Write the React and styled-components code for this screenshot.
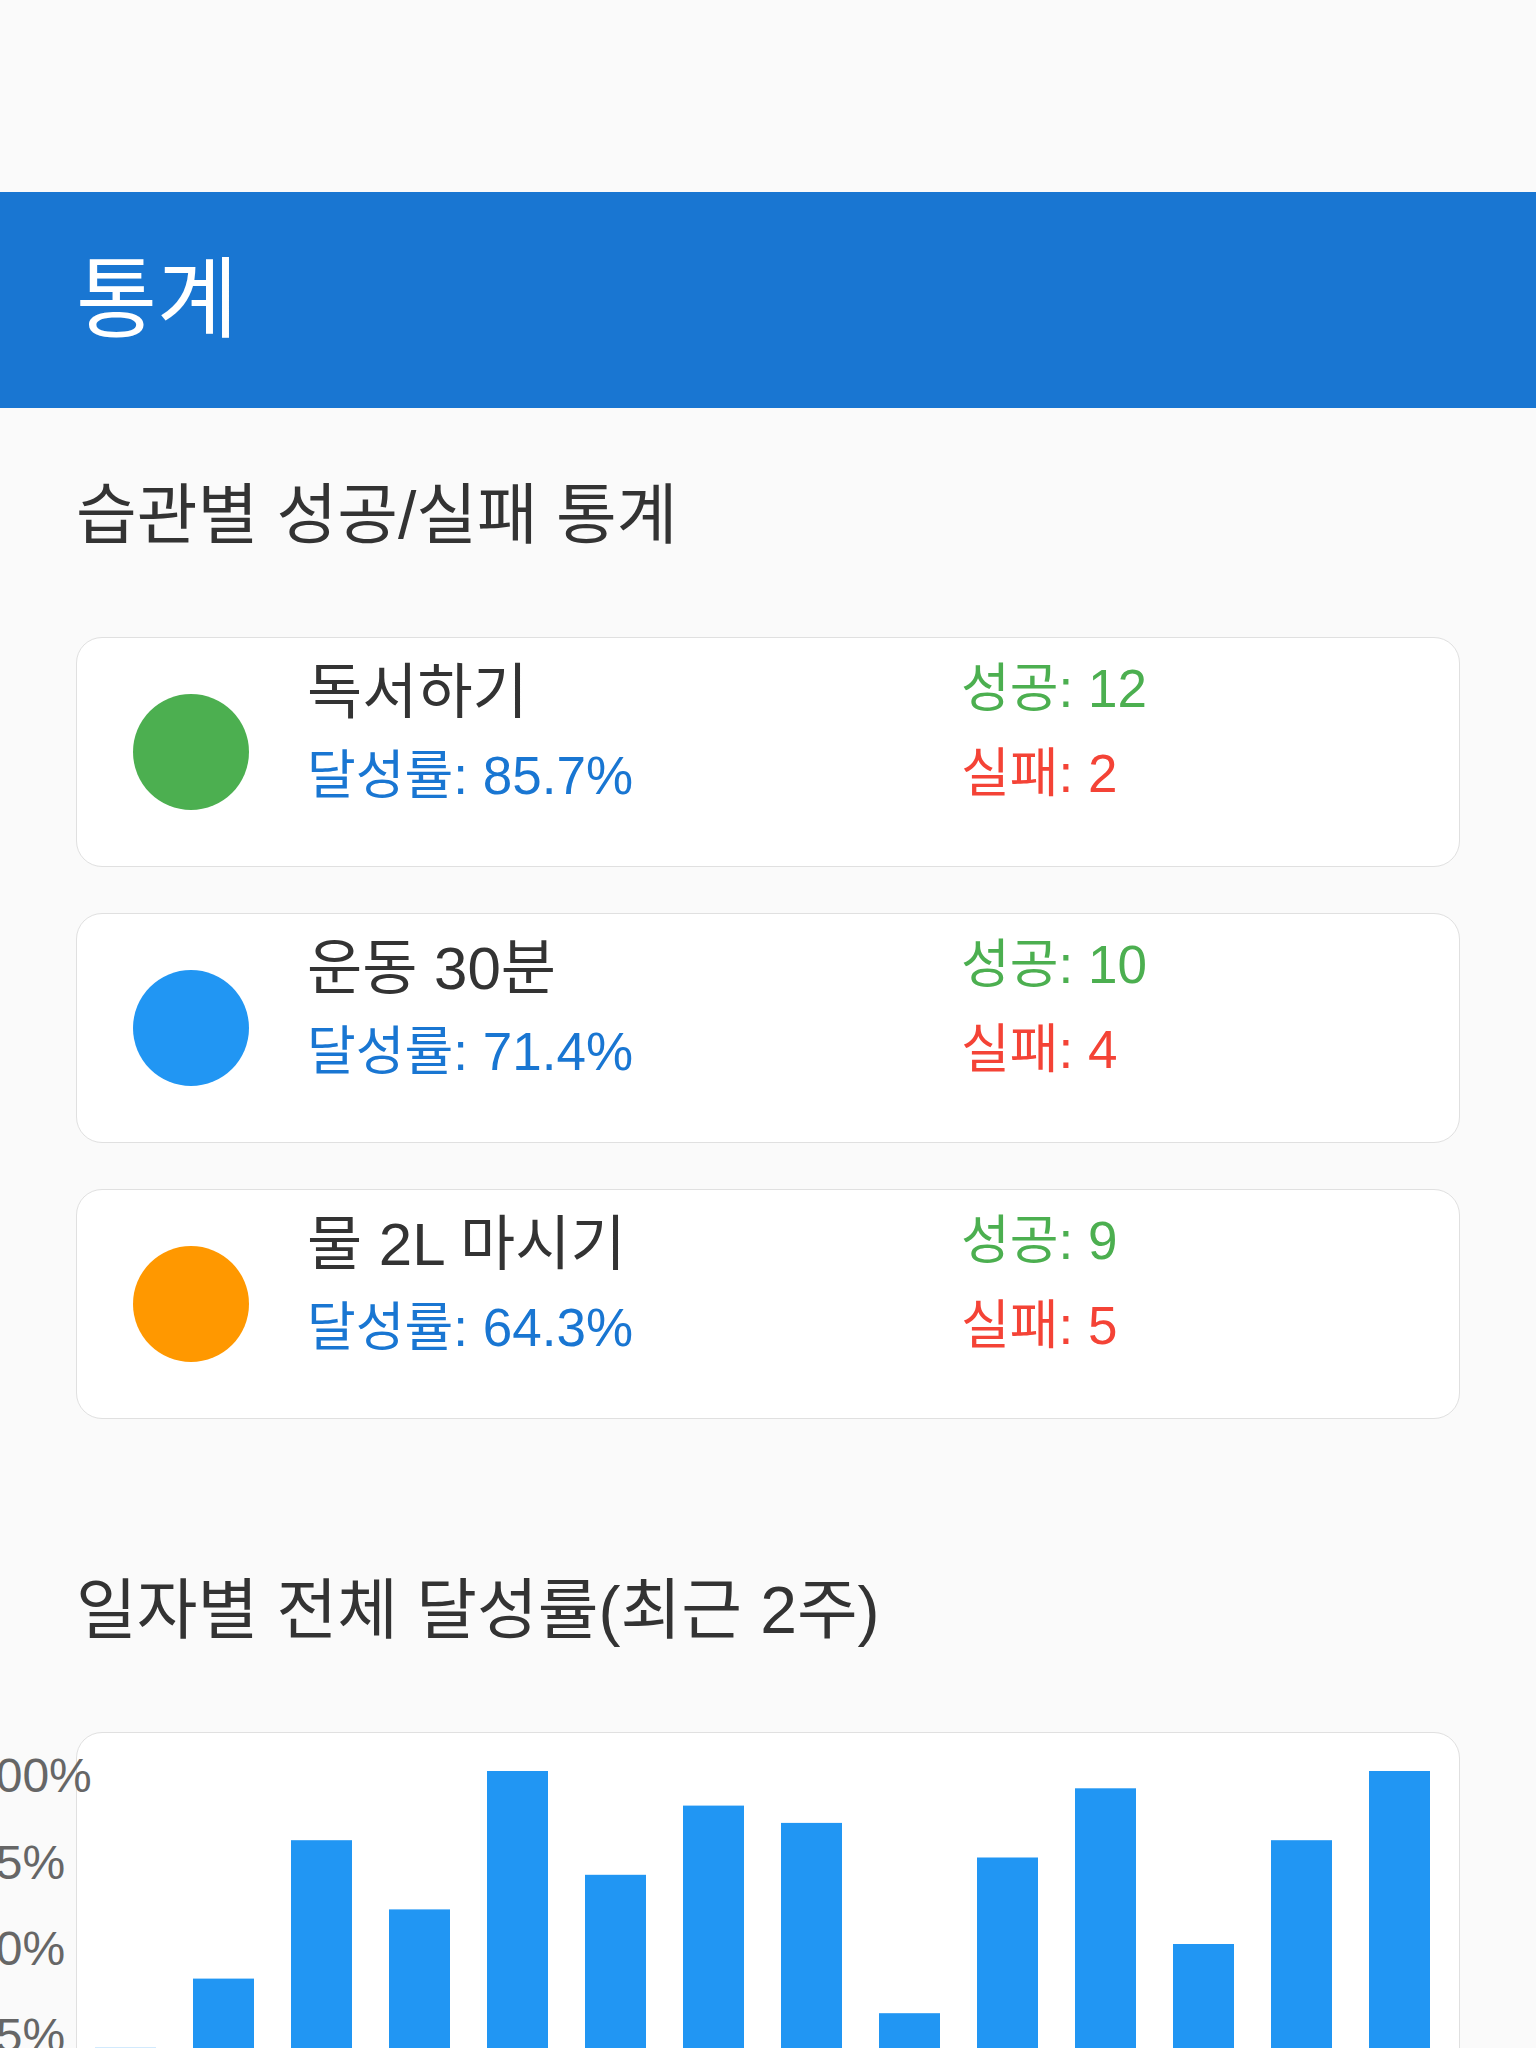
import React from "react";
import styled, { createGlobalStyle } from "styled-components";

const GlobalStyle = createGlobalStyle`
  html, body {
    margin: 0;
    padding: 0;
    background: #fafafa;
  }
  body {
    font-family: "Liberation Sans", "Noto Sans CJK KR", sans-serif;
    color: #333333;
  }
  * {
    box-sizing: border-box;
  }
`;

const Page = styled.div`
  width: 1536px;
  min-height: 2048px;
  background: #fafafa;
`;

const StatusArea = styled.div`
  height: 192px;
`;

const Header = styled.header`
  height: 216px;
  background: #1976d2;
  display: flex;
  align-items: center;
  padding: 0 76px;
`;

const HeaderTitle = styled.h1`
  margin: 0;
  font-size: 88px;
  font-weight: 400;
  line-height: 1.2;
  color: #ffffff;
`;

const Body = styled.main`
  padding: 0 76px 80px;
`;

const SectionTitle = styled.h2`
  margin: ${(props) => props.top}px 0 82px;
  font-size: 66px;
  font-weight: 400;
  line-height: 1.2;
  color: #333333;
`;

const CardList = styled.div`
  display: flex;
  flex-direction: column;
  gap: 46px;
`;

const HabitCard = styled.div`
  height: 230px;
  display: flex;
  align-items: flex-start;
  padding: 19px 56px 0 56px;
  background: #ffffff;
  border: 1px solid #e0e0e0;
  border-radius: 26px;
`;

const Dot = styled.div`
  width: 116px;
  height: 116px;
  flex-shrink: 0;
  margin-top: 37px;
  margin-right: 58px;
  border-radius: 50%;
  background: ${(props) => props.color};
`;

const Info = styled.div`
  flex: 1;
  display: flex;
  flex-direction: column;
  gap: 15px;
`;

const HabitName = styled.div`
  font-size: 60px;
  line-height: 1.2;
  color: #333333;
`;

const Rate = styled.div`
  font-size: 53px;
  line-height: 1.2;
  color: #1976d2;
`;

const Counts = styled.div`
  width: 442px;
  display: flex;
  flex-direction: column;
  gap: 21px;
`;

const Count = styled.div`
  font-size: 53px;
  line-height: 1.2;
  color: ${(props) => props.color};
`;

const ChartCard = styled.div`
  background: #ffffff;
  border: 1px solid #e0e0e0;
  border-radius: 26px;
  overflow: visible;
`;

const ChartSvg = styled.svg`
  display: block;
  overflow: visible;
  font-family: "Liberation Sans", "Noto Sans CJK KR", sans-serif;
`;

const habits = [
  { name: "독서하기", color: "#4caf50", rate: "85.7%", success: 12, fail: 2 },
  { name: "운동 30분", color: "#2196f3", rate: "71.4%", success: 10, fail: 4 },
  { name: "물 2L 마시기", color: "#ff9800", rate: "64.3%", success: 9, fail: 5 },
];

// daily overall completion rate, last 14 days
const daily = [20, 40, 80, 60, 100, 70, 90, 85, 30, 75, 95, 50, 80, 100];

const PLOT_TOP = 38;
const PLOT_H = 346;
const PITCH = 98;
const BAR_W = 61;
const BAR_X0 = 18;

const RateChart = () => {
  const width = 1382;
  const height = PLOT_TOP + PLOT_H + 60;
  const ticks = [100, 75, 50, 25, 0];
  return (
    <ChartSvg width={width} height={height} viewBox={`0 0 ${width} ${height}`}>
      {ticks.map((t) => (
        <text
          key={t}
          x={-108}
          y={PLOT_TOP + ((100 - t) / 100) * PLOT_H + 21}
          fontSize="48"
          fill="#666666"
        >
          {t}%
        </text>
      ))}
      {daily.map((v, i) => {
        const h = (v / 100) * PLOT_H;
        return (
          <rect
            key={i}
            x={BAR_X0 + i * PITCH}
            y={PLOT_TOP + PLOT_H - h}
            width={BAR_W}
            height={h}
            fill="#2196f3"
          />
        );
      })}
    </ChartSvg>
  );
};

export default function App() {
  return (
    <Page>
      <GlobalStyle />
      <StatusArea />
      <Header>
        <HeaderTitle>통계</HeaderTitle>
      </Header>
      <Body>
        <SectionTitle top={68}>습관별 성공/실패 통계</SectionTitle>
        <CardList>
          {habits.map((h) => (
            <HabitCard key={h.name}>
              <Dot color={h.color} />
              <Info>
                <HabitName>{h.name}</HabitName>
                <Rate>달성률: {h.rate}</Rate>
              </Info>
              <Counts>
                <Count color="#4caf50">성공: {h.success}</Count>
                <Count color="#f44336">실패: {h.fail}</Count>
              </Counts>
            </HabitCard>
          ))}
        </CardList>
        <SectionTitle top={152}>일자별 전체 달성률(최근 2주)</SectionTitle>
        <ChartCard>
          <RateChart />
        </ChartCard>
      </Body>
    </Page>
  );
}
